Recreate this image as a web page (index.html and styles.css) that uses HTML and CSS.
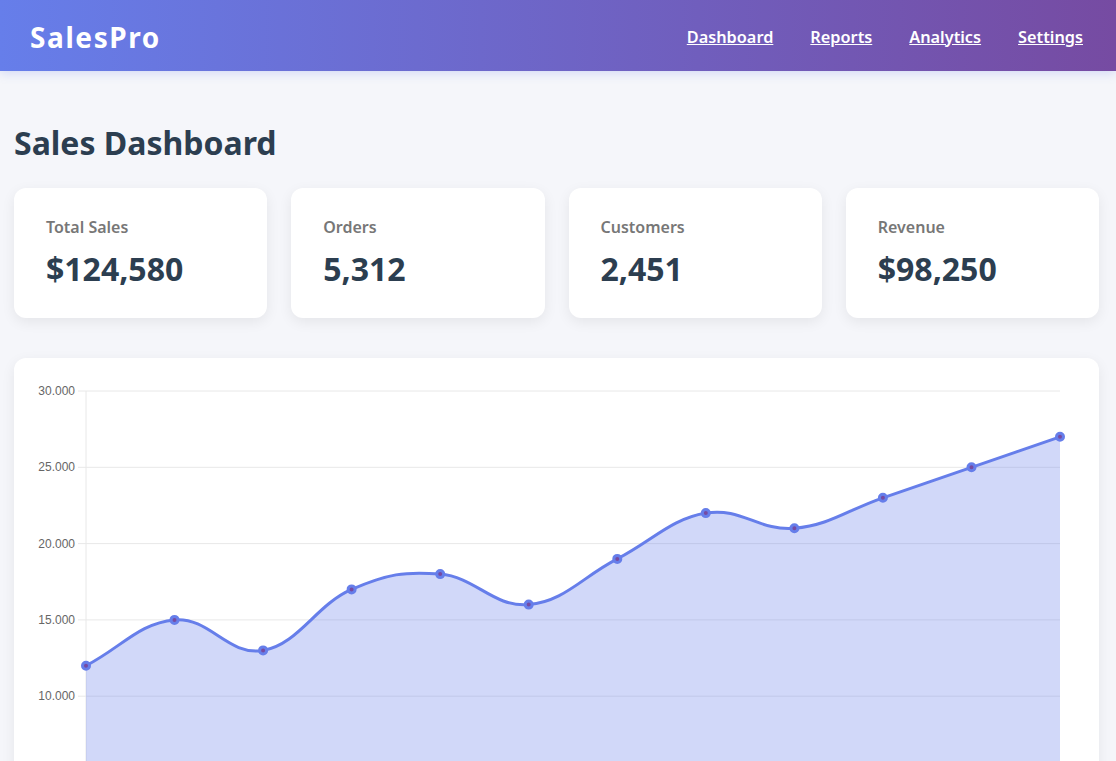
FILE: index.html
```html
<!DOCTYPE html>
<html lang="en">
<head>
<meta charset="utf-8">
<title>SalesPro - Sales Dashboard</title>
<link rel="stylesheet" href="styles.css">
</head>
<body>
<header class="topbar">
  <div class="logo">SalesPro</div>
  <nav class="nav">
    <a href="#">Dashboard</a>
    <a href="#">Reports</a>
    <a href="#">Analytics</a>
    <a href="#">Settings</a>
  </nav>
</header>
<main class="container">
  <h1 class="page-title">Sales Dashboard</h1>
  <section class="stats">
    <div class="stat-card"><div class="stat-label">Total Sales</div><div class="stat-value">$124,580</div></div>
    <div class="stat-card"><div class="stat-label">Orders</div><div class="stat-value">5,312</div></div>
    <div class="stat-card"><div class="stat-label">Customers</div><div class="stat-value">2,451</div></div>
    <div class="stat-card"><div class="stat-label">Revenue</div><div class="stat-value">$98,250</div></div>
  </section>
  <section class="chart-card">
    <svg class="chart" width="1037" height="400" viewBox="0 0 1037 400">
      <g class="grid">
        <line x1="40" y1="9" x2="1022" y2="9"/>
        <line x1="40" y1="85.3" x2="1022" y2="85.3"/>
        <line x1="40" y1="161.6" x2="1022" y2="161.6"/>
        <line x1="40" y1="237.9" x2="1022" y2="237.9"/>
        <line x1="40" y1="314.2" x2="1022" y2="314.2"/>
        <line x1="40" y1="390.5" x2="1022" y2="390.5"/>
        <line x1="48" y1="9" x2="48" y2="400"/>
      </g>
      <g class="ylabels">
        <text x="37" y="13">30.000</text>
        <text x="37" y="89.3">25.000</text>
        <text x="37" y="165.6">20.000</text>
        <text x="37" y="241.9">15.000</text>
        <text x="37" y="318.2">10.000</text>
      </g>
      <path class="area" d="M48,283.7 C83.4,265.4 101.1,240.96 136.5,237.9 C171.9,234.84 189.7,274.5 225.1,268.4 C260.5,262.3 278.2,222.66 313.6,207.4 C349,192.14 366.8,189.06 402.2,192.1 C437.6,195.14 455.3,225.64 490.7,222.6 C526.1,219.56 543.9,195.2 579.3,176.9 C614.7,158.6 632.4,137.22 667.8,131.1 C703.2,124.98 721,149.36 756.4,146.3 C791.8,143.24 809.5,128 844.9,115.8 C880.3,103.6 898.1,97.5 933.5,85.3 C968.9,73.1 986.6,67 1022,54.8 L1022,400 L48,400 Z"/>
      <path class="line" d="M48,283.7 C83.4,265.4 101.1,240.96 136.5,237.9 C171.9,234.84 189.7,274.5 225.1,268.4 C260.5,262.3 278.2,222.66 313.6,207.4 C349,192.14 366.8,189.06 402.2,192.1 C437.6,195.14 455.3,225.64 490.7,222.6 C526.1,219.56 543.9,195.2 579.3,176.9 C614.7,158.6 632.4,137.22 667.8,131.1 C703.2,124.98 721,149.36 756.4,146.3 C791.8,143.24 809.5,128 844.9,115.8 C880.3,103.6 898.1,97.5 933.5,85.3 C968.9,73.1 986.6,67 1022,54.8"/>
      <g class="points">
        <circle cx="48" cy="283.7" r="3.5"/>
        <circle cx="136.5" cy="237.9" r="3.5"/>
        <circle cx="225.1" cy="268.4" r="3.5"/>
        <circle cx="313.6" cy="207.4" r="3.5"/>
        <circle cx="402.2" cy="192.1" r="3.5"/>
        <circle cx="490.7" cy="222.6" r="3.5"/>
        <circle cx="579.3" cy="176.9" r="3.5"/>
        <circle cx="667.8" cy="131.1" r="3.5"/>
        <circle cx="756.4" cy="146.3" r="3.5"/>
        <circle cx="844.9" cy="115.8" r="3.5"/>
        <circle cx="933.5" cy="85.3" r="3.5"/>
        <circle cx="1022" cy="54.8" r="3.5"/>
      </g>
    </svg>
  </section>
</main>
</body>
</html>
```
FILE: styles.css
```css
* { box-sizing: border-box; }

body {
  margin: 0;
  background: #f5f6fa;
  font-family: "Noto Sans", "Open Sans", sans-serif;
  color: #2c3e50;
}

.topbar {
  height: 71px;
  display: flex;
  align-items: center;
  justify-content: space-between;
  padding: 2px 33px 0 30px;
  background: linear-gradient(90deg, #667eea 0%, #764ba2 100%);
  box-shadow: 0 2px 10px rgba(102, 126, 234, 0.25);
  position: relative;
  z-index: 1;
}

.logo {
  color: #fff;
  font-size: 28px;
  font-weight: 700;
  letter-spacing: 1.6px;
}

.nav {
  display: flex;
  gap: 37px;
}

.nav a {
  color: #fff;
  font-size: 16.3px;
  font-weight: 600;
  text-decoration: underline;
}

.container {
  padding: 50px 17px 0 14px;
}

.page-title {
  margin: 0 0 24px;
  font-size: 32px;
  font-weight: 700;
  line-height: normal;
  color: #2c3e50;
}

.stats {
  display: grid;
  grid-template-columns: repeat(4, 1fr);
  gap: 24px;
  margin-bottom: 40px;
}

.stat-card {
  background: #fff;
  border-radius: 12px;
  padding: 28px 32px;
  height: 130px;
  box-shadow: 0 4px 14px rgba(0, 0, 0, 0.07);
}

.stat-label {
  font-size: 16px;
  font-weight: 600;
  color: #777;
  margin-bottom: 9px;
}

.stat-value {
  font-size: 32px;
  font-weight: 700;
  color: #2c3e50;
}

.chart-card {
  background: #fff;
  border-radius: 12px;
  padding: 24px;
  box-shadow: 0 4px 14px rgba(0, 0, 0, 0.07);
}

.chart {
  display: block;
}

.grid line {
  stroke: #e8e8e8;
  stroke-width: 1;
}

.ylabels text {
  font-family: "Liberation Sans", Arial, sans-serif;
  font-size: 12px;
  fill: #666;
  text-anchor: end;
}

.area {
  fill: rgba(102, 126, 234, 0.3);
}

.line {
  fill: none;
  stroke: #667eea;
  stroke-width: 3;
}

.points circle {
  fill: #764ba2;
  stroke: #667eea;
  stroke-width: 3;
}
```
